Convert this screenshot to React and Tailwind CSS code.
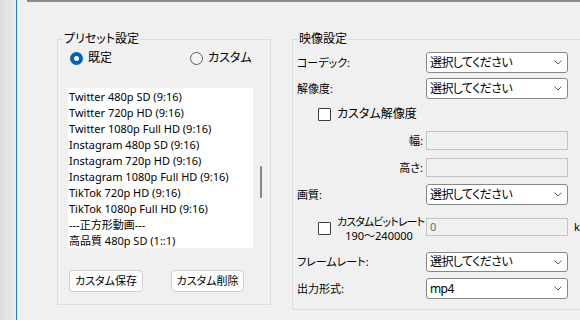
import React from 'react'

const presets = [
  'Twitter 480p SD (9:16)',
  'Twitter 720p HD (9:16)',
  'Twitter 1080p Full HD (9:16)',
  'Instagram 480p SD (9:16)',
  'Instagram 720p HD (9:16)',
  'Instagram 1080p Full HD (9:16)',
  'TikTok 720p HD (9:16)',
  'TikTok 1080p Full HD (9:16)',
  '---正方形動画---',
  '高品質 480p SD (1::1)',
  '高品質 720p HD (1::1)',
]

function Chevron() {
  return (
    <svg width="8" height="5" viewBox="0 0 8 5" className="shrink-0">
      <polyline points="0.5,0.5 4,4 7.5,0.5" fill="none" stroke="#5f5f5f" strokeWidth="1" />
    </svg>
  )
}

function Select({ value, h = 'h-[21px]' }) {
  return (
    <div className={`w-[142px] ${h} shrink-0 flex items-center justify-between bg-white border border-[#878787] rounded-[3px] pl-[3px] pr-[5px]`}>
      <span className="text-[12px] tracking-[-0.6px]">{value}</span>
      <Chevron />
    </div>
  )
}

function Checkbox() {
  return <div className="w-[13px] h-[13px] shrink-0 bg-white border border-[#3c3c3c] rounded-[1px]" />
}

function Radio({ checked, label, className = '' }) {
  return (
    <div className={`flex items-center gap-[5px] ${className}`}>
      {checked ? (
        <div className="w-[13px] h-[13px] rounded-full bg-[#0060b8] flex items-center justify-center">
          <div className="w-[5px] h-[5px] rounded-full bg-white" />
        </div>
      ) : (
        <div className="w-[13px] h-[13px] rounded-full bg-[#f4f4f4] border border-[#5c5c5c]" />
      )}
      <span>{label}</span>
    </div>
  )
}

export default function App() {
  return (
    <div className="w-[580px] h-[320px] overflow-hidden flex bg-[#f0f0f0] text-[11px] leading-[16px] text-black font-['Noto_Sans','Noto_Sans_CJK_JP',sans-serif] [font-feature-settings:'palt']">
      <div className="w-[16px] h-full shrink-0 bg-gradient-to-r from-[#dcdcdc] to-[#ececec]" />
      <div className="w-px h-full shrink-0 bg-[#1a7fd4]" />

      <div className="flex-1 min-w-0 flex flex-col">
        <div className="ml-[10px] h-[2px] bg-[#8a8a8a]" />

        <div className="flex items-start mt-[29px] ml-[40px]">
          {/* プリセット */}
          <fieldset className="w-[214px] h-[274px] shrink-0 border border-[#dcdcdc]">
            <legend className="ml-[5px] px-[1px] text-[12px]">プリセット設定</legend>
            <div className="mt-[3px] h-[16px] flex items-center pl-[12px] text-[12px]">
              <Radio checked label="既定" className="w-[120px]" />
              <Radio label="カスタム" />
            </div>

            <div className="mt-[22px] ml-[10px] w-[202px] h-[160px] flex bg-white">
              <div className="flex-1 overflow-hidden pt-[1px] pl-[1px]">
                {presets.map((p) => (
                  <div key={p} className="h-[16px] whitespace-nowrap">{p}</div>
                ))}
              </div>
              <div className="w-[17px] bg-[#f0f0f0] pt-[78px] pl-[7px]">
                <div className="w-[2px] h-[32px] rounded-full bg-[#868686]" />
              </div>
            </div>

            <div className="mt-[22px] ml-[11px] flex gap-[28px]">
              <button className="w-[74px] h-[22px] bg-[#fdfdfd] border border-[#d0d0d0] rounded-[4px]">カスタム保存</button>
              <button className="w-[73px] h-[22px] bg-[#fdfdfd] border border-[#d0d0d0] rounded-[4px]">カスタム削除</button>
            </div>
          </fieldset>

          {/* 映像設定 */}
          <fieldset className="ml-[21px] w-[320px] h-[279px] shrink-0 border border-[#dcdcdc]">
            <legend className="ml-[5px] px-[1px] text-[12px]">映像設定</legend>

            <div className="mt-[5px] flex items-center">
              <div className="w-[133px] pl-[4px]">コーデック:</div>
              <Select value="選択してください" />
            </div>
            <div className="mt-[5px] flex items-center">
              <div className="w-[133px] pl-[4px]">解像度:</div>
              <Select value="選択してください" />
            </div>

            <div className="mt-[7px] h-[16px] pl-[25px] flex items-center gap-[6px]">
              <Checkbox />
              <span className="text-[12px]">カスタム解像度</span>
            </div>

            <div className="mt-[9px] flex items-center">
              <div className="w-[133px] text-right pr-[3px]">幅:</div>
              <div className="w-[142px] h-[19px] bg-[#f0f0f0] border border-[#c4c4c4]" />
            </div>
            <div className="mt-[8px] flex items-center">
              <div className="w-[133px] text-right pr-[3px]">高さ:</div>
              <div className="w-[142px] h-[19px] bg-[#f0f0f0] border border-[#c4c4c4]" />
            </div>

            <div className="mt-[7px] flex items-center">
              <div className="w-[133px] pl-[4px]">画質:</div>
              <Select value="選択してください" />
            </div>

            <div className="mt-[10px] h-[28px] flex items-start">
              <div className="pl-[25px] pt-[7px]">
                <Checkbox />
              </div>
              <div className="ml-[6px] w-[84px] text-center leading-[14px] whitespace-nowrap">
                <div className="tracking-[-0.9px]">カスタムビットレート</div>
                <div>190〜240000</div>
              </div>
              <div className="ml-[5px] mt-[3px] w-[142px] h-[18px] shrink-0 flex items-center pl-[3px] text-[#6d6d6d] bg-[#f0f0f0] border border-[#c4c4c4]">0</div>
              <div className="ml-[6px] mt-[4px] whitespace-nowrap">kbps</div>
            </div>

            <div className="mt-[9px] flex items-center">
              <div className="w-[133px] pl-[4px]">フレームレート:</div>
              <Select value="選択してください" h="h-[20px]" />
            </div>
            <div className="mt-[6px] flex items-center">
              <div className="w-[133px] pl-[4px]">出力形式:</div>
              <Select value="mp4" />
            </div>
          </fieldset>
        </div>
      </div>
    </div>
  )
}
